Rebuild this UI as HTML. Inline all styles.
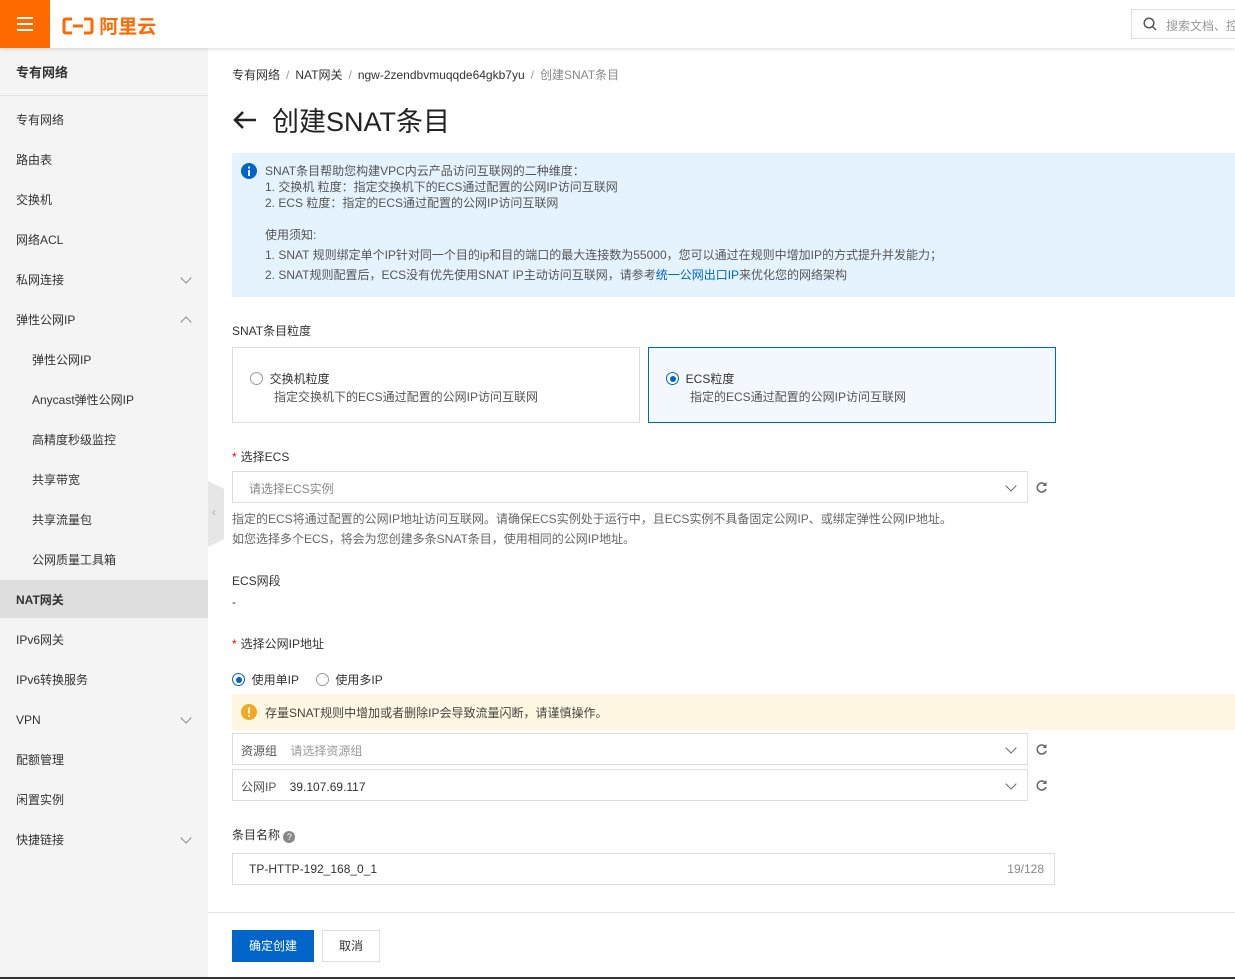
<!DOCTYPE html>
<html><head><meta charset="utf-8"><style>
*{margin:0;padding:0;box-sizing:border-box}
body{width:1235px;height:979px;overflow:hidden;font-family:"Liberation Sans","Noto Sans CJK SC",sans-serif;font-size:12px;color:#333;background:#fff;position:relative}
.hd{position:absolute;left:0;top:0;width:1235px;height:48px;background:#fff;box-shadow:0 1px 4px rgba(0,0,0,.15);z-index:5}
.burger{position:absolute;left:0;top:0;width:50px;height:48px;background:#ff6a00}
.burger i{position:absolute;left:17px;width:16px;height:2px;background:#fff}
.logo{position:absolute;left:62px;top:12px;color:#ff6a00;font-size:19px;font-weight:bold;display:flex;align-items:center}
.search{position:absolute;left:1131px;top:9px;width:110px;height:30px;border:1px solid #ddd;color:#999;font-size:12px;padding:7px 0 0 34px;white-space:nowrap;overflow:hidden}
.side{position:absolute;left:0;top:48px;width:208px;height:931px;background:#f4f4f4}
.side .t{height:48px;line-height:50px;padding-left:16px;font-weight:bold;font-size:13px;color:#333;border-bottom:1px solid #e3e3e3}
.side .it{position:absolute;left:0;width:208px;height:38px;line-height:40px;padding-left:16px;color:#333;font-size:12px}
.side .sub{padding-left:32px}
.side .sel{background:#dedede;font-weight:bold}
.chev{position:absolute;right:18px;top:14px;width:8px;height:8px;border-right:1.5px solid #888;border-bottom:1.5px solid #888;transform:rotate(45deg)}
.chev.up{transform:rotate(-135deg);top:18px}
.abs{position:absolute}
.bc{left:232px;top:66px;color:#333}
.bc span{color:#999;margin:0 6px}
.title{left:232px;top:100px;font-size:27px;color:#222;display:flex;align-items:center}
.info{left:232px;top:153px;width:1003px;height:144px;background:#e5f3ff;line-height:16px;color:#555;padding:10px 0 0 33px}
.box{border:1px solid #ddd;background:#fff}
.radio{display:inline-block;width:13px;height:13px;border:1px solid #999;border-radius:50%;vertical-align:-2px;background:#fff;position:relative}
.radio.on{border-color:#0064c8}
.radio.on:after{content:"";position:absolute;left:2.5px;top:2.5px;width:6px;height:6px;border-radius:50%;background:#0064c8}
.sel-arrow{position:absolute;right:12px;top:10px;width:8px;height:8px;border-right:1.5px solid #666;border-bottom:1.5px solid #666;transform:rotate(45deg)}
.refresh{position:absolute}
.req{color:#e00;margin-right:4px}
</style></head><body>
<div class="hd">
<div class="burger"><i style="top:17px"></i><i style="top:23px"></i><i style="top:29px"></i></div>
<div class="logo"><svg width="32" height="18" viewBox="0 0 32 18"><path d="M10 2H4Q2 2 2 4V14Q2 16 4 16H10M22 2H28Q30 2 30 4V14Q30 16 28 16H22M11 9H21" stroke="#ff6a00" stroke-width="3" fill="none"/></svg>&nbsp;阿里云</div>
<div class="search"><svg class="abs" style="left:11px;top:7px" width="14" height="14"><circle cx="6" cy="6" r="4.8" stroke="#555" stroke-width="1.5" fill="none"/><path d="M9.5 9.5L13 13" stroke="#555" stroke-width="1.5"/></svg>搜索文档、控制台</div>
</div>
<div class="side">
<div class="t">专有网络</div>
<div class="it" style="top:52px">专有网络</div>
<div class="it" style="top:92px">路由表</div>
<div class="it" style="top:132px">交换机</div>
<div class="it" style="top:172px">网络ACL</div>
<div class="it" style="top:212px">私网连接<i class="chev"></i></div>
<div class="it" style="top:252px">弹性公网IP<i class="chev up"></i></div>
<div class="it sub" style="top:292px">弹性公网IP</div>
<div class="it sub" style="top:332px">Anycast弹性公网IP</div>
<div class="it sub" style="top:372px">高精度秒级监控</div>
<div class="it sub" style="top:412px">共享带宽</div>
<div class="it sub" style="top:452px">共享流量包</div>
<div class="it sub" style="top:492px">公网质量工具箱</div>
<div class="it sel" style="top:532px">NAT网关</div>
<div class="it" style="top:572px">IPv6网关</div>
<div class="it" style="top:612px">IPv6转换服务</div>
<div class="it" style="top:652px">VPN<i class="chev"></i></div>
<div class="it" style="top:692px">配额管理</div>
<div class="it" style="top:732px">闲置实例</div>
<div class="it" style="top:772px">快捷链接<i class="chev"></i></div>
</div>
<div class="abs" style="left:208px;top:481px;width:16px;height:66px;background:#e6e6e6;clip-path:polygon(0 0,100% 12%,100% 88%,0 100%)"><span style="position:absolute;left:4px;top:24px;color:#aaa">‹</span></div>

<div class="abs bc">专有网络<span>/</span>NAT网关<span>/</span>ngw-2zendbvmuqqde64gkb7yu<span>/</span><b style="font-weight:normal;color:#888">创建SNAT条目</b></div>
<div class="abs title"><svg width="26" height="20" viewBox="0 0 26 20" style="margin-right:14px"><path d="M24 10H3M11 2L3 10L11 18" stroke="#222" stroke-width="2.6" fill="none"/></svg>创建SNAT条目</div>
<div class="abs info">
<svg class="abs" style="left:9px;top:10px" width="16" height="16"><circle cx="8" cy="8" r="8" fill="#0064c8"/><rect x="7" y="7" width="2" height="6" fill="#fff"/><rect x="7" y="3.5" width="2" height="2" fill="#fff"/></svg>
SNAT条目帮助您构建VPC内云产品访问互联网的二种维度：<br>1. 交换机 粒度：指定交换机下的ECS通过配置的公网IP访问互联网<br>2. ECS 粒度：指定的ECS通过配置的公网IP访问互联网<div style="margin-top:14px;line-height:20px">使用须知:<br>1. SNAT 规则绑定单个IP针对同一个目的ip和目的端口的最大连接数为55000，您可以通过在规则中增加IP的方式提升并发能力；<br>2. SNAT规则配置后，ECS没有优先使用SNAT IP主动访问互联网，请参考<span style="color:#0064c8">统一公网出口IP</span>来优化您的网络架构</div>
</div>
<div class="abs" style="left:232px;top:322px">SNAT条目粒度</div>
<div class="abs box" style="left:232px;top:347px;width:408px;height:76px;padding:22px 0 0 17px;line-height:18px"><span class="radio"></span>&nbsp;&nbsp;交换机粒度<br><span style="padding-left:24px;color:#555">指定交换机下的ECS通过配置的公网IP访问互联网</span></div>
<div class="abs box" style="left:648px;top:347px;width:408px;height:76px;padding:22px 0 0 17px;line-height:18px;border-color:#0064c8;background:#f2f8fd"><span class="radio on"></span>&nbsp;&nbsp;ECS粒度<br><span style="padding-left:24px;color:#555">指定的ECS通过配置的公网IP访问互联网</span></div>
<div class="abs" style="left:232px;top:448px"><span class="req">*</span>选择ECS</div>
<div class="abs box" style="left:232px;top:471px;width:796px;height:32px;padding:8px 16px;color:#888">请选择ECS实例<i class="sel-arrow"></i></div>
<svg class="refresh" style="left:1035px;top:481px" width="13" height="13" viewBox="0 0 13 13"><path d="M10.5 4A4.5 4.5 0 1 0 11 8" stroke="#666" stroke-width="1.5" fill="none"/><path d="M11.5 1V5H7.5" fill="#666"/></svg>
<div class="abs" style="left:232px;top:509px;line-height:20px;color:#666">指定的ECS将通过配置的公网IP地址访问互联网。请确保ECS实例处于运行中，且ECS实例不具备固定公网IP、或绑定弹性公网IP地址。<br>如您选择多个ECS，将会为您创建多条SNAT条目，使用相同的公网IP地址。</div>
<div class="abs" style="left:232px;top:572px">ECS网段</div>
<div class="abs" style="left:232px;top:595px">-</div>
<div class="abs" style="left:232px;top:635px"><span class="req">*</span>选择公网IP地址</div>
<div class="abs" style="left:232px;top:671px"><span class="radio on"></span>&nbsp;&nbsp;使用单IP&nbsp;&nbsp;&nbsp;&nbsp;&nbsp;<span class="radio"></span>&nbsp;&nbsp;使用多IP</div>
<div class="abs" style="left:232px;top:694px;width:1003px;height:36px;background:#fff7e1;padding:10px 0 0 33px;color:#444">
<svg class="abs" style="left:9px;top:10px" width="16" height="16"><circle cx="8" cy="8" r="8" fill="#f5a623"/><rect x="7" y="3.5" width="2" height="6" fill="#fff"/><rect x="7" y="11" width="2" height="2" fill="#fff"/></svg>存量SNAT规则中增加或者删除IP会导致流量闪断，请谨慎操作。</div>
<div class="abs box" style="left:232px;top:733px;width:796px;height:32px;padding:8px 8px"><span style="color:#555">资源组</span>&nbsp;&nbsp;&nbsp;&nbsp;<span style="color:#999">请选择资源组</span><i class="sel-arrow"></i></div>
<svg class="refresh" style="left:1035px;top:743px" width="13" height="13" viewBox="0 0 13 13"><path d="M10.5 4A4.5 4.5 0 1 0 11 8" stroke="#666" stroke-width="1.5" fill="none"/><path d="M11.5 1V5H7.5" fill="#666"/></svg>
<div class="abs box" style="left:232px;top:769px;width:796px;height:32px;padding:8px 8px"><span style="color:#555">公网IP</span>&nbsp;&nbsp;&nbsp;&nbsp;39.107.69.117<i class="sel-arrow"></i></div>
<svg class="refresh" style="left:1035px;top:779px" width="13" height="13" viewBox="0 0 13 13"><path d="M10.5 4A4.5 4.5 0 1 0 11 8" stroke="#666" stroke-width="1.5" fill="none"/><path d="M11.5 1V5H7.5" fill="#666"/></svg>
<div class="abs" style="left:232px;top:826px">条目名称 <span style="display:inline-block;width:12px;height:12px;border-radius:50%;background:#888;color:#fff;font-size:9px;text-align:center;line-height:12px;vertical-align:-1px">?</span></div>
<div class="abs box" style="left:232px;top:853px;width:823px;height:32px;padding:8px 16px">TP-HTTP-192_168_0_1<span style="position:absolute;right:10px;color:#888">19/128</span></div>
<div class="abs" style="left:208px;top:912px;width:1027px;height:67px;border-top:1px solid #e5e5e5;background:#fff"></div>
<div class="abs" style="left:232px;top:930px;width:82px;height:32px;background:#0064c8;color:#fff;text-align:center;line-height:32px">确定创建</div>
<div class="abs box" style="left:322px;top:930px;width:58px;height:32px;text-align:center;line-height:30px">取消</div>
<div class="abs" style="left:0;top:977px;width:1235px;height:2px;background:#333"></div>
</body></html>
